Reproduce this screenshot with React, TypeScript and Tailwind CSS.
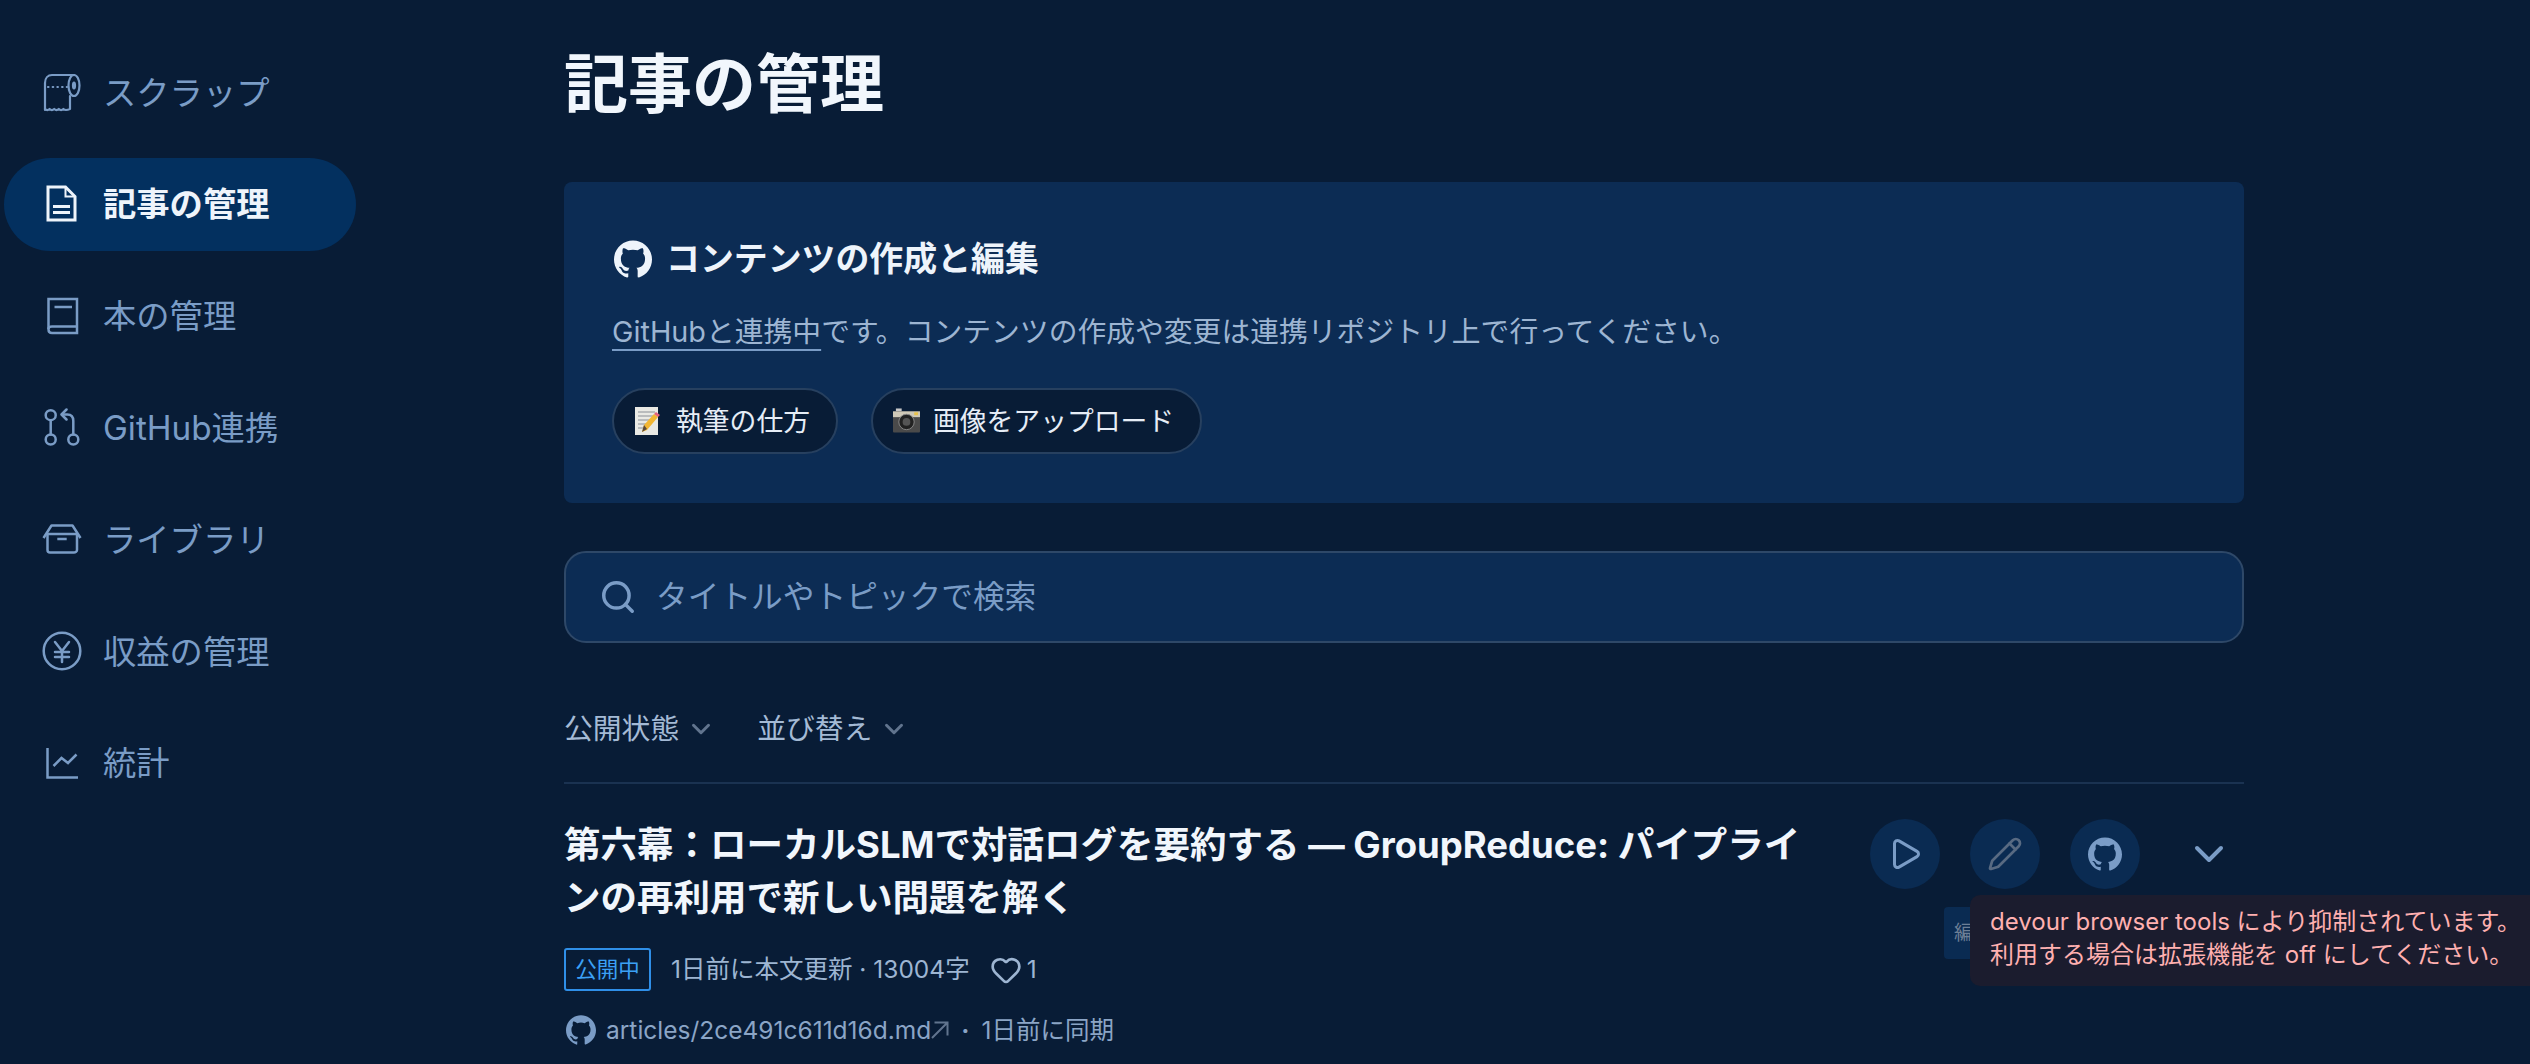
import { ChevronDown, Heart, Pencil, Play, Search } from "lucide-react";
import { SiGithub } from "react-icons/si";

const stroke = {
  fill: "none",
  stroke: "currentColor",
  strokeWidth: 2.5,
  strokeLinecap: "round" as const,
  strokeLinejoin: "round" as const,
};

function ScrapIcon() {
  return (
    <svg viewBox="0 0 40 40" className="h-[40px] w-[40px]" {...stroke} strokeWidth={2.2}>
      <path d="M3 37V10c0-5 3-8 7-8h22" />
      <ellipse cx="32" cy="12.500" rx="5.500" ry="10.500" />
      <ellipse cx="32" cy="12.500" rx="1" ry="3" />
      <path d="M3 36c1.500 1.500 3 1.500 4.600 0 1.500 1.500 3 1.500 4.600 0 1.500 1.500 3 1.500 4.600 0 1.500 1.500 3 1.500 4.600 0 1.500 1.500 3 1.500 6.600 0V23" />
      <path d="M6 14h19" strokeDasharray="0.5 4.200" />
    </svg>
  );
}

function DocIcon() {
  return (
    <svg viewBox="0 0 40 40" className="h-[40px] w-[40px]" fill="none" stroke="currentColor" strokeWidth="3">
      <path d="M6 3h17.500L33 12.500V36H6z" />
      <path d="M23.500 3v9.500H33" strokeWidth="2" />
      <path d="M11 22.500h17M11 28.500h17" />
    </svg>
  );
}

function BookIcon() {
  return (
    <svg viewBox="0 0 40 40" className="h-[40px] w-[40px]" {...stroke} strokeLinecap="butt" strokeLinejoin="miter">
      <path d="M35 37H10c-2.500 0-3.500-1.500-3.500-3.500V3H35z" />
      <path d="M6.500 33c0-1.500 1-2.500 3.500-2.500h25" />
      <path d="M12.500 11H30" />
    </svg>
  );
}

function RepoIcon() {
  return (
    <svg viewBox="0 0 40 40" className="h-[40px] w-[40px]" {...stroke}>
      <circle cx="8.700" cy="7.200" r="5" />
      <circle cx="8.700" cy="31.500" r="5" />
      <circle cx="31.300" cy="31.500" r="5" />
      <path d="M8.700 12.200v14.300" />
      <path d="M31.300 26.500V13c0-4.500-2-6.500-6-6.500h-5" />
      <path d="M24.500 1.500l-5 5 5 5" />
    </svg>
  );
}

function BoxIcon() {
  return (
    <svg viewBox="0 0 40 40" className="h-[40px] w-[40px]" {...stroke} strokeLinecap="butt">
      <path d="M1.500 18L9.500 5.500h21L38.500 18" />
      <path d="M6 14h28" />
      <path d="M5.500 13v17c0 1.500 1 2.500 2.500 2.500h24c1.500 0 3-1 3-2.500V13" />
      <path d="M15.300 19h9.400" />
    </svg>
  );
}

function YenIcon() {
  return (
    <svg viewBox="0 0 40 40" className="h-[40px] w-[40px]" {...stroke}>
      <circle cx="20" cy="20" r="18.300" />
      <path d="M13 11l7 9 7-9M20 20v11M13 21h14M13 26h14" />
    </svg>
  );
}

function ChartIcon() {
  return (
    <svg viewBox="0 0 40 40" className="h-[40px] w-[40px]" {...stroke} strokeLinecap="butt" strokeLinejoin="miter">
      <path d="M5.500 5v29.500H36" />
      <path d="M11.500 23l8-8 6.500 5 8.500-8.500" />
    </svg>
  );
}

function ExternalArrow() {
  return (
    <svg viewBox="0 0 18 18" className="h-[18px] w-[18px] text-[#61748e]" fill="none" stroke="currentColor" strokeWidth="2">
      <path d="M1 17L16.500 1.500M3.500 1.500h13v13" />
    </svg>
  );
}

function MemoEmoji() {
  return (
    <svg viewBox="0 0 26 30" className="h-[30px] w-[26px]">
      <rect x="1" y="1" width="23" height="28" fill="#e9e9e4" />
      <path d="M4 6h17M4 10h17M4 14h12M4 18h8M4 22h6" stroke="#8a8f96" strokeWidth="1" />
      <path d="M8 26l2-7L20 8l4 3-11 13z" fill="#f2b632" />
      <path d="M20 8l2-2 4 3-2 2z" fill="#e2627a" />
      <path d="M8 26l2-7 3 4z" fill="#5a4a3a" />
    </svg>
  );
}

function CameraEmoji() {
  return (
    <svg viewBox="0 0 28 26" className="h-[26px] w-[27px]">
      <rect x="3" y="0" width="6" height="3" fill="#c8c8c8" />
      <rect x="0" y="3" width="28" height="22" rx="1" fill="#4a4a4a" />
      <rect x="0" y="3" width="28" height="6" fill="#cfc9b8" />
      <circle cx="14" cy="14" r="8" fill="#222" stroke="#888" strokeWidth="1" />
      <circle cx="14" cy="14" r="4" fill="#555" />
      <rect x="22" y="4" width="4" height="3" fill="#e8c24a" />
    </svg>
  );
}

const navItems = [
  { label: "スクラップ", icon: <ScrapIcon /> },
  { label: "記事の管理", icon: <DocIcon />, active: true },
  { label: "本の管理", icon: <BookIcon /> },
  { label: "GitHub連携", icon: <RepoIcon /> },
  { label: "ライブラリ", icon: <BoxIcon /> },
  { label: "収益の管理", icon: <YenIcon /> },
  { label: "統計", icon: <ChartIcon /> },
];

export default function App() {
  return (
    <div className="relative flex h-[1064px] overflow-hidden bg-[#081c36] font-['Inter','Noto_Sans_CJK_JP',sans-serif]">
      <nav className="flex w-[564px] shrink-0 flex-col gap-[18.800px] pl-[4px] pt-[46px]">
        {navItems.map((item) => (
          <div
            key={item.label}
            className={
              item.active
                ? "flex h-[93px] w-[352px] items-center gap-[21px] rounded-full bg-[#03305f] pl-[38px] text-[33.300px] font-bold text-[#eef4fb]"
                : "flex h-[93px] w-[352px] items-center gap-[21px] rounded-full pl-[38px] text-[33.300px] text-[#7a9cc6]"
            }
          >
            {item.icon}
            <span className="pt-[2px]">{item.label}</span>
          </div>
        ))}
      </nav>

      <main className="w-[1680px] shrink-0">
        <h1 className="mt-[42px] text-[64px] leading-[84px] font-bold text-[#f1f6fc]">記事の管理</h1>

        <section className="mt-[56px] h-[321px] rounded-[8px] bg-[#0c2c54] pl-[48px] pt-[52px]">
          <h2 className="flex items-center gap-[14px] pl-[2px] text-[33.900px] leading-[50px] font-bold text-[#eef4fb]">
            <SiGithub className="h-[38px] w-[38px]" />
            コンテンツの作成と編集
          </h2>
          <p className="mt-[27px] text-[28.800px] leading-[42px] text-[#9db5d2]">
            <span className="underline decoration-[#7a9cc6] decoration-2 underline-offset-[7px]">GitHubと連携中</span>
            です。コンテンツの作成や変更は連携リポジトリ上で行ってください。
          </p>
          <div className="mt-[35px] flex gap-[33px]">
            <button className="flex h-[66px] items-center gap-[16px] rounded-full border-2 border-[#27405f] bg-[#081c36] pl-[20px] pr-[26px] text-[26.800px] text-[#e6edf6]">
              <MemoEmoji />
              執筆の仕方
            </button>
            <button className="flex h-[66px] items-center gap-[13px] rounded-full border-2 border-[#27405f] bg-[#081c36] pl-[20px] pr-[26px] text-[26.800px] text-[#e6edf6]">
              <CameraEmoji />
              画像をアップロード
            </button>
          </div>
        </section>

        <div className="mt-[48px] flex h-[92px] items-center gap-[19px] rounded-[22px] border-2 border-[#2e4868] bg-[#0c2c54] pl-[33px] text-[31.700px] text-[#7a9cc6]">
          <Search className="h-[38px] w-[38px]" strokeWidth={2.2} />
          タイトルやトピックで検索
        </div>

        <div className="mt-[64px] flex gap-[41px] text-[28.800px] leading-[44px] text-[#a4bad5]">
          <div className="flex items-center gap-[7px]">
            公開状態
            <ChevronDown className="h-[30px] w-[30px] text-[#61748e]" strokeWidth={2.4} />
          </div>
          <div className="flex items-center gap-[7px]">
            並び替え
            <ChevronDown className="h-[30px] w-[30px] text-[#61748e]" strokeWidth={2.4} />
          </div>
        </div>

        <div className="mt-[31px] flex h-[300px] border-t-2 border-[#1a3251] pt-[35px]">
          <div className="w-[1240px] shrink-0">
            <h3 className="text-[36.500px] leading-[53px] font-bold text-[#f1f6fc]">
              第六幕：ローカルSLMで対話ログを要約する — GroupReduce: パイプラインの再利用で新しい問題を解く
            </h3>
            <div className="mt-[23px] flex items-center text-[24.500px] text-[#9db5d2]">
              <span className="flex h-[43px] w-[87px] items-center justify-center rounded-[3px] border-2 border-[#2f8fe8] text-[21.500px] text-[#3ba0f5]">
                公開中
              </span>
              <span className="ml-[20px]">1日前に本文更新 · 13004字</span>
              <Heart className="ml-[20px] h-[32px] w-[32px]" strokeWidth={2} />
              <span className="ml-[5px]">1</span>
            </div>
            <div className="mt-[21px] flex items-center text-[24.500px] text-[#8ba5c6]">
              <SiGithub className="ml-[2px] h-[30px] w-[30px] text-[#7a9cc6]" />
              <span className="ml-[10px]">articles/2ce491c611d16d.md</span>
              <ExternalArrow />
              <span className="ml-[12px] font-bold">·</span>
              <span className="ml-[12px]">1日前に同期</span>
            </div>
          </div>
          <div className="ml-[66px] flex h-[70px] items-center gap-[30px]">
            <div className="flex h-[70px] w-[70px] items-center justify-center rounded-full bg-[#0a2b52] text-[#7a9cc6]">
              <Play className="h-[36px] w-[36px]" strokeWidth={2} />
            </div>
            <div className="flex h-[70px] w-[70px] items-center justify-center rounded-full bg-[#0a2b52] text-[#586a82]">
              <Pencil className="h-[36px] w-[36px]" strokeWidth={1.8} />
            </div>
            <div className="flex h-[70px] w-[70px] items-center justify-center rounded-full bg-[#0a2b52] text-[#7a9cc6]">
              <SiGithub className="h-[34px] w-[34px]" />
            </div>
            <ChevronDown className="ml-[15px] h-[48px] w-[48px] text-[#7a9cc6]" strokeWidth={2} />
          </div>
        </div>
      </main>

      <div className="absolute left-[1944px] top-[907px] flex h-[52px] w-[60px] items-center rounded-[4px] bg-[#0a2b52] pl-[10px] text-[20px] text-[#6d7f96]">
        編
      </div>
      <div className="absolute left-[1970px] top-[895px] h-[91px] w-[560px] rounded-l-[10px] bg-[#1b1c2e] pl-[20px] pt-[10px] text-[24px] leading-[33px] whitespace-nowrap text-[#ffb0b0]">
        devour browser tools により抑制されています。
        <br />
        利用する場合は拡張機能を off にしてください。
      </div>
    </div>
  );
}
